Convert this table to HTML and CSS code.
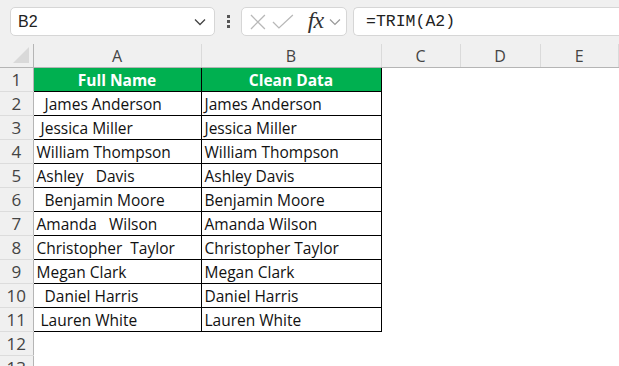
FILE: index.html
```html
<!DOCTYPE html>
<html lang="en">
  <head>
    <meta charset="UTF-8" />
    <meta name="viewport" content="width=device-width, initial-scale=1.0" />
    <title>TRIM - Clean Data</title>
    <link rel="stylesheet" href="styles.css">
  </head>
  <body>
    <!-- Barra de fórmulas -->
    <header class="barra">
      <div class="caixa-nome">
        <span>B2</span>
        <svg class="seta" width="12" height="8" viewBox="0 0 12 8"><path d="M1 1.5 L6 6.5 L11 1.5" fill="none" stroke="#444" stroke-width="1.3"/></svg>
      </div>
      <div class="pontos"><i></i><i></i><i></i></div>
      <div class="caixa-botoes">
        <svg width="18" height="18" viewBox="0 0 18 18"><path d="M2 2 L16 16 M16 2 L2 16" stroke="#b8b8b8" stroke-width="1.3"/></svg>
        <svg width="24" height="18" viewBox="0 0 24 18"><path d="M2 9 L8 15 L22 2" fill="none" stroke="#b8b8b8" stroke-width="1.3"/></svg>
        <span class="fx">fx</span>
        <svg class="seta" width="12" height="8" viewBox="0 0 12 8"><path d="M1 1.5 L6 6.5 L11 1.5" fill="none" stroke="#999" stroke-width="1.2"/></svg>
      </div>
      <div class="formula">=TRIM(A2)</div>
    </header>

    <main class="planilha">
      <table>
        <colgroup>
          <col style="width: 33px" />
          <col style="width: 168px" />
          <col style="width: 180px" />
          <col style="width: 79px" />
          <col style="width: 80px" />
          <col />
        </colgroup>
        <thead>
          <tr>
            <th class="canto"><span class="triangulo"></span></th>
            <th>A</th>
            <th>B</th>
            <th>C</th>
            <th>D</th>
            <th>E</th>
          </tr>
        </thead>
        <tbody>
          <tr>
            <th>1</th>
            <td class="titulo">Full Name</td>
            <td class="titulo">Clean Data</td>
            <td></td><td></td><td></td>
          </tr>
          <tr><th>2</th><td class="dado">  James Anderson</td><td class="dado">James Anderson</td><td></td><td></td><td></td></tr>
          <tr><th>3</th><td class="dado"> Jessica Miller</td><td class="dado">Jessica Miller</td><td></td><td></td><td></td></tr>
          <tr><th>4</th><td class="dado">William Thompson</td><td class="dado">William Thompson</td><td></td><td></td><td></td></tr>
          <tr><th>5</th><td class="dado">Ashley   Davis</td><td class="dado">Ashley Davis</td><td></td><td></td><td></td></tr>
          <tr><th>6</th><td class="dado">  Benjamin Moore</td><td class="dado">Benjamin Moore</td><td></td><td></td><td></td></tr>
          <tr><th>7</th><td class="dado">Amanda   Wilson</td><td class="dado">Amanda Wilson</td><td></td><td></td><td></td></tr>
          <tr><th>8</th><td class="dado">Christopher  Taylor</td><td class="dado">Christopher Taylor</td><td></td><td></td><td></td></tr>
          <tr><th>9</th><td class="dado">Megan Clark</td><td class="dado">Megan Clark</td><td></td><td></td><td></td></tr>
          <tr><th>10</th><td class="dado">  Daniel Harris</td><td class="dado">Daniel Harris</td><td></td><td></td><td></td></tr>
          <tr><th>11</th><td class="dado"> Lauren White</td><td class="dado">Lauren White</td><td></td><td></td><td></td></tr>
          <tr><th>12</th><td></td><td></td><td></td><td></td><td></td></tr>
          <tr><th>13</th><td></td><td></td><td></td><td></td><td></td></tr>
        </tbody>
      </table>
    </main>
  </body>
</html>
```

FILE: styles.css
```css
body {
  margin: 0;
  font-family: "Open Sans", "Noto Sans", sans-serif;
  background-color: #fff;
  overflow: hidden;
}

/* Barra de fórmulas */
.barra {
  display: flex;
  align-items: center;
  height: 43px;
  padding: 0 0 0 10px;
  background-color: #f0f0f0;
  box-sizing: border-box;
}

.caixa-nome,
.caixa-botoes,
.formula {
  height: 29px;
  background: #fff;
  border: 1px solid #d6d6d6;
  border-radius: 5px;
  box-sizing: border-box;
  display: flex;
  align-items: center;
}

.caixa-nome {
  width: 205px;
  padding: 0 8px 0 7px;
  justify-content: space-between;
  font-family: "Liberation Sans", Arial, sans-serif;
  font-size: 16px;
  color: #222;
}

.pontos {
  width: 26px;
  display: flex;
  flex-direction: column;
  align-items: center;
  gap: 2px;
}

.pontos i {
  width: 3px;
  height: 3px;
  background: #555;
}

.caixa-botoes {
  width: 106px;
  padding: 0 5px 0 7px;
  gap: 4px;
}

.fx {
  font-family: "Liberation Serif", serif;
  font-style: italic;
  font-size: 24px;
  line-height: 1;
  color: #333;
  margin-left: 9px;
  margin-right: 2px;
  margin-top: -3px;
  letter-spacing: -1px;
}

.formula {
  flex: 1;
  margin-left: 6px;
  border-right: none;
  border-radius: 5px 0 0 5px;
  padding-left: 12px;
  font-family: "Liberation Mono", "DejaVu Sans Mono", monospace;
  font-size: 16.5px;
  color: #222;
}

/* Grade da planilha */
.planilha {
  padding-top: 1px;
  background: #f0f0f0;
}

table {
  border-collapse: collapse;
  table-layout: fixed;
  width: 100%;
}

thead th {
  height: 23px;
  padding: 0;
  background: #f0f0f0;
  font-weight: normal;
  font-size: 16px;
  color: #444;
  border-right: 1px solid #dadada;
  border-bottom: 1px solid #b5b5b5;
}

.canto {
  position: relative;
  border-right: 1px solid #b5b5b5;
}

.triangulo {
  position: absolute;
  right: 4px;
  bottom: 4px;
  width: 0;
  height: 0;
  border-left: 16px solid transparent;
  border-bottom: 16px solid #d9d9d9;
}

tbody th {
  height: 23px;
  padding: 0;
  background: #f0f0f0;
  font-weight: normal;
  font-size: 17px;
  color: #444;
  text-align: center;
  border-right: 1px solid #b5b5b5;
  border-bottom: 1px solid #dcdcdc;
}

tbody td {
  padding: 0 3px;
  background: #fff;
  font-size: 15.5px;
  white-space: pre;
  overflow: hidden;
}

.titulo {
  background: #00b050;
  color: #fff;
  font-weight: bold;
  text-align: center;
  border: 1px solid #000;
}

.dado {
  color: #111;
  border: 1px solid #000;
}
```
